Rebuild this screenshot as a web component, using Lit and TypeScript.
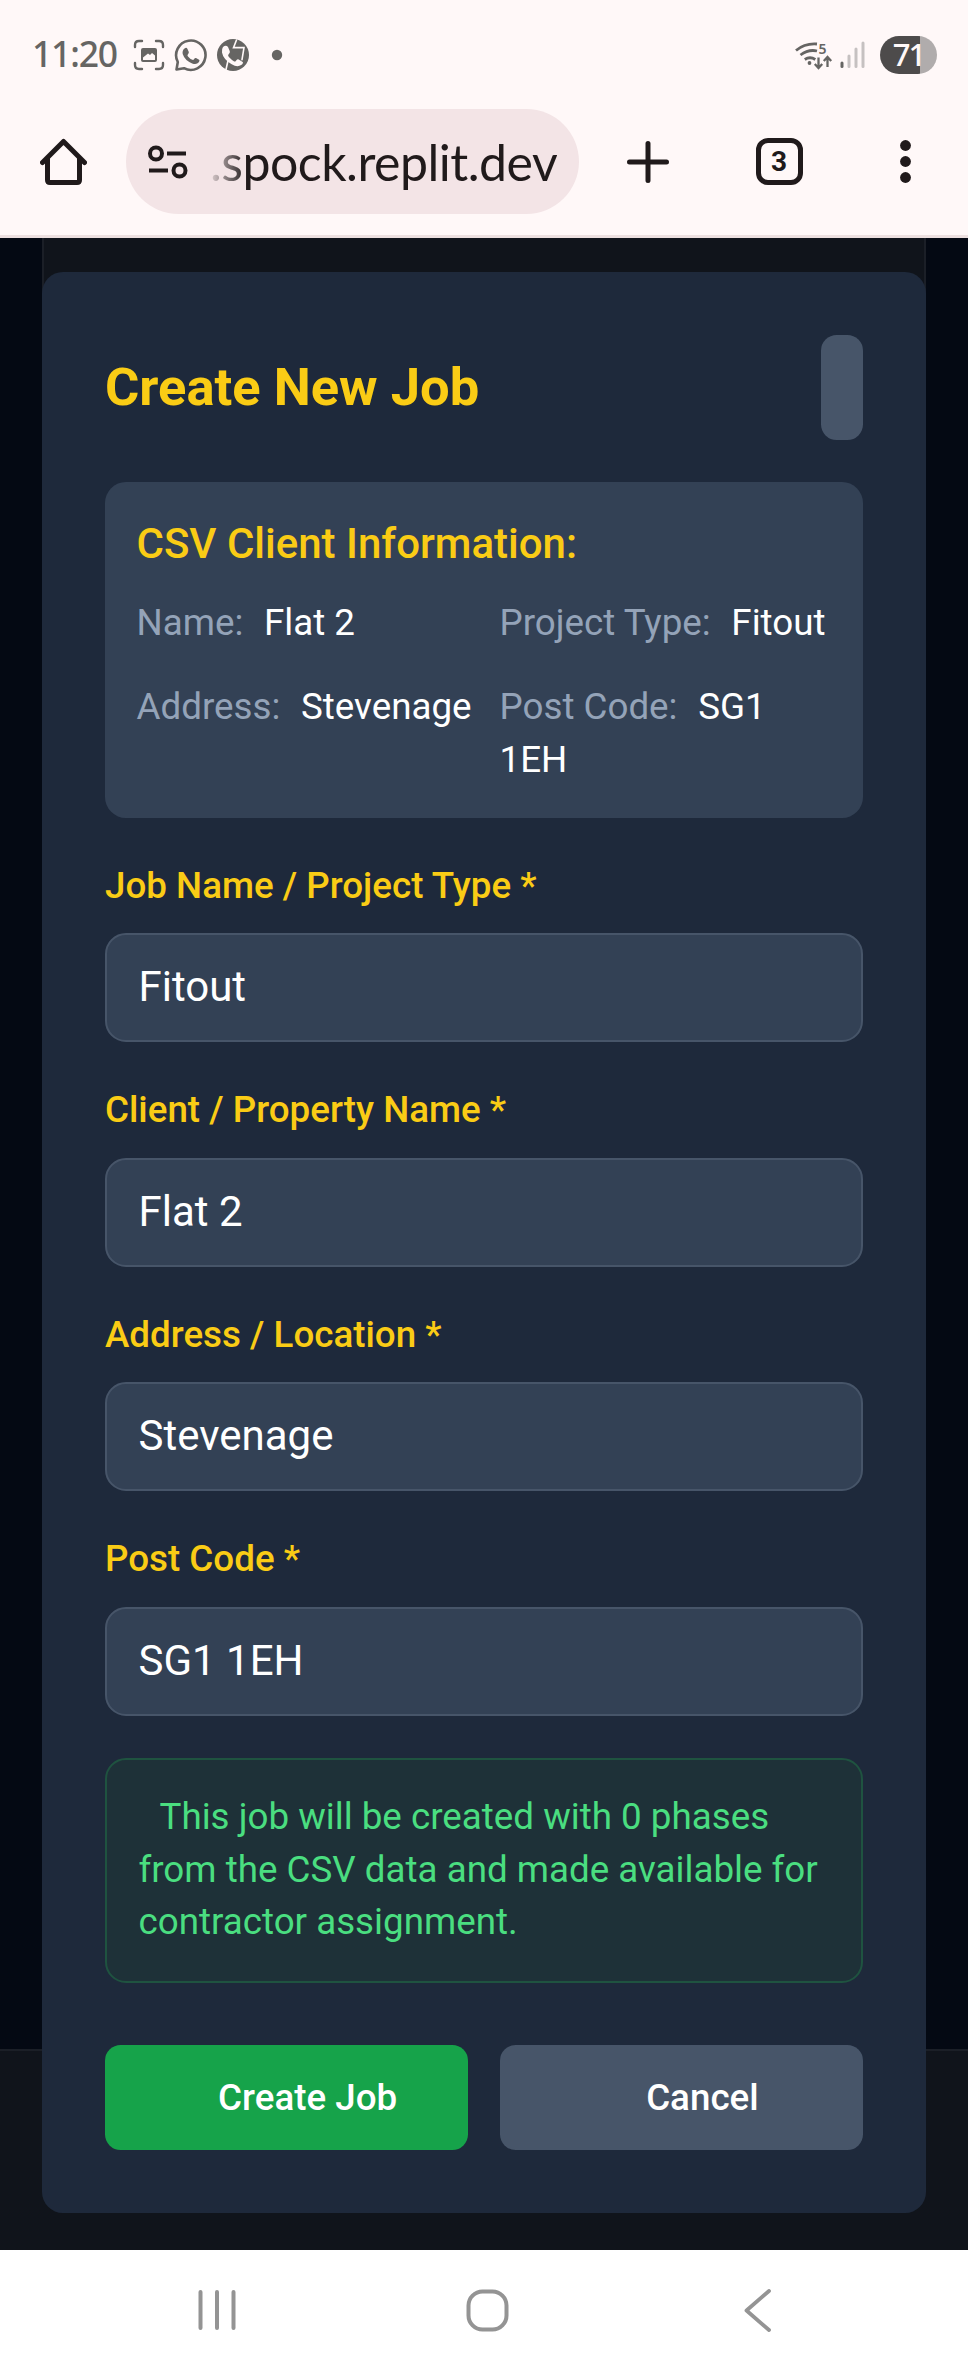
import { LitElement, html, css } from "lit";
import { customElement, property } from "lit/decorators.js";

@customElement("status-bar")
class StatusBar extends LitElement {
  static styles = css`
    :host { display: flex; align-items: center; height: 109px; box-sizing: border-box; padding: 0 31px 0 32px; color: #666563; }
    .clock { width: 101px; padding-bottom: 4px; font: 500 35.500px/48px "Noto Sans", sans-serif; letter-spacing: -1.200px; white-space: nowrap; }
    .left { flex: 1; display: flex; }
    svg { display: block; }
    .battery { display: grid; place-items: center; box-sizing: border-box; width: 57px; height: 38px; border-radius: 19px; margin-left: 14px; padding-bottom: 2px;
      background: linear-gradient(90deg, #4d4b4b 0 40px, #b0acac 40px); color: #fff8f8; font: 500 31px/36px "Noto Sans", sans-serif; letter-spacing: -2px; }
    .five { font: 600 14px "Noto Sans", sans-serif; fill: #666563; }
  `;
  render() {
    return html`
      <span class="clock">11:20</span>
      <span class="left">
        <svg width="155" height="34" viewBox="133 38 155 34" fill="none" stroke="#666563" stroke-width="2.4" stroke-linecap="round">
          <path d="M135 47v-2q0-4 4-4h3M156 41h3q4 0 4 4v2M163 63v2q0 4-4 4h-3M142 69h-3q-4 0-4-4v-2"/>
          <path fill="#666563" stroke="none" fill-rule="evenodd" d="M143 48h12q2 0 2 2v10q0 2-2 2h-12q-2 0-2-2V50q0-2 2-2zM143 60h12v-4.500l-3-2.500-2 2-2-1.500-5 4z"/>
          <path stroke-width="2.600" stroke-linejoin="round" d="M176.500 69.500l1.300-7.500A14.700 14.700 0 1 1 184 68.200z"/>
          <path fill="#666563" stroke="none" d="M184.500 48.500q2-1.500 3 .5l1.300 3q.4 1-1 2.400-.8.800.2 2 2 2.500 4.500 3.400.8.300 1.300-.4 1.300-1.800 2.200-1.300l3.100 1.600q1 .6-.3 2.600-2.300 2.700-6.600 1.100-7.500-3-9.500-9.400-.7-3.500 1.800-5.500z"/>
          <circle cx="233" cy="55" r="16" fill="#666563" stroke="none"/>
          <path fill="#fff8f8" stroke="none" d="M223 47q3-2.500 5 0l1.800 4.300q.6 1.500-1.500 3.400-.6 1 .6 2.400 2.700 3 5.300 4.400 1 .3 1.800-.8 1.600-2 2.700-1.200l4 2.400q1 1-1.500 3.200-4 2.500-9.500-.8-8.500-5-9.700-11.800-.5-3.500 1-5.500z"/>
          <path stroke="#fff8f8" stroke-width="1.600" d="M236.500 40l-3 7.600h10.500l-2 12M228 60.500l-2 9"/>
          <circle cx="277" cy="55" r="5.200" fill="#666563" stroke="none"/>
        </svg>
      </span>
      <svg width="72" height="38" viewBox="795 36 72 38" fill="none" stroke="#666563" stroke-width="2.800">
        <path d="M797 50.500q9-7.500 21-6.500M801.500 55q8-6 16.500-4M805.800 59.500q5.200-3.500 10.500 0"/>
        <circle cx="810.500" cy="63" r="1.900" fill="#666563" stroke="none"/>
        <path stroke-width="2.300" d="M819.500 57.500v9.500M815.800 64l3.700 4 3.700-4M828.500 67v-9.500M824.800 61l3.700-4 3.700 4"/>
        <text class="five" x="819.500" y="54" stroke="none">5</text>
        <g stroke-width="3" stroke-linecap="round"><path d="M843 63v3.500"/><path stroke="#c6c1c1" d="M850 56v10.500M857 49v17.500M864 43v23.500"/></g>
      </svg>
      <span class="battery">71</span>
    `;
  }
}

@customElement("browser-bar")
class BrowserBar extends LitElement {
  static styles = css`
    :host { display: flex; align-items: center; height: 129px; box-sizing: border-box; padding: 0 44px 21px 40px; border-bottom: 3px solid #ede0e0; color: #201a1b; }
    svg { display: block; flex: none; }
    .home { margin-right: 39px; }
    .omnibox { display: flex; align-items: center; box-sizing: border-box; width: 453px; height: 105px; border-radius: 52.500px; padding-left: 22px; background: #f3e4e6; margin-right: 47.500px; }
    .url { margin-left: 22px; font: 400 50px/60px Lato, sans-serif; letter-spacing: -0.500px; white-space: nowrap;
      color: transparent; background: linear-gradient(90deg, rgba(32,26,27,.1) 0, #201a1b 36px); background-clip: text; -webkit-background-clip: text; }
    .tabs { display: grid; place-items: center; box-sizing: border-box; width: 47px; height: 47px; border: 5px solid #201a1b; border-radius: 12px; margin: 0 97.500px 0 87px; font: 700 28px/30px Roboto, sans-serif; }
  `;
  render() {
    return html`
      <svg class="home" width="47" height="48" viewBox="0 0 47 48" fill="none" stroke="#201a1b" stroke-width="5" stroke-linecap="round" stroke-linejoin="round">
        <path d="M2.500 24.500L23.500 3.500l21 21M7.500 20v22q0 2.500 2.500 2.500h27q2.500 0 2.500-2.500V20"/>
      </svg>
      <div class="omnibox">
        <svg width="40" height="34" viewBox="0 0 40 34" fill="none" stroke="#201a1b" stroke-width="4">
          <circle cx="8" cy="8.500" r="6"/><circle cx="31.500" cy="25.500" r="6"/><path d="M19 8.500h19M1 25.500h19"/>
        </svg>
        <span class="url">.spock.replit.dev</span>
      </div>
      <svg width="42" height="42" viewBox="0 0 42 42" stroke="#201a1b" stroke-width="5" stroke-linecap="round"><path d="M21 2.500v37M2.500 21h37"/></svg>
      <span class="tabs">3</span>
      <svg width="11" height="43" viewBox="0 0 11 43" fill="#201a1b"><circle cx="5.500" cy="5.500" r="5.400"/><circle cx="5.500" cy="21.500" r="5.400"/><circle cx="5.500" cy="37.500" r="5.400"/></svg>
    `;
  }
}

@customElement("form-field")
class FormField extends LitElement {
  @property() label = "";
  @property() value = "";
  static styles = css`
    :host { display: flex; flex-direction: column; gap: 21px; }
    .label { color: #facc15; font-weight: 500; font-size: 36.750px; line-height: 52.500px; }
    .input { box-sizing: border-box; width: 100%; height: 109px; margin: 0; padding: 0 31.500px 2px; border: 2px solid #475569; border-radius: 21px; background: #334155; color: #fff; font: 400 42px/63px Roboto, sans-serif; outline: none; }
  `;
  render() {
    return html`<label class="label" for="f">${this.label}</label><input class="input" id="f" .value=${this.value} />`;
  }
}

@customElement("job-dialog")
class JobDialog extends LitElement {
  static styles = css`
    :host { display: block; box-sizing: border-box; height: 1941px; padding: 63px; border-radius: 21px; background: #1e293b; font: 400 36.750px/52.500px Roboto, sans-serif; color: #fff; }
    .head { display: flex; align-items: center; justify-content: space-between; height: 105px; margin-bottom: 42px; }
    .title { margin: 0; color: #facc15; font-size: 52.500px; line-height: 73.500px; font-weight: 700; }
    .close { width: 42px; height: 105px; padding: 0; border: 0; border-radius: 15.750px; background: #475569; }
    .info { padding: 31px 31.500px 32px; border-radius: 21px; background: #334155; margin-bottom: 41.500px; }
    .info-title { margin: 0 0 23px; color: #facc15; font-size: 42px; line-height: 61px; font-weight: 500; }
    .grid { display: grid; grid-template-columns: 342px minmax(0, 1fr); gap: 31.500px 21px; }
    .key { color: #94a3b8; }
    .val { margin-left: 11.500px; }
    .fields { display: flex; flex-direction: column; gap: 42px; margin-bottom: 42.500px; }
    .note { box-sizing: border-box; padding: 31px 31.500px 32px; border: 2px solid #1f5340; border-radius: 21px; background: #1e3138; color: #4ade80; text-indent: 21px; margin-bottom: 62.500px; }
    .actions { display: grid; grid-template-columns: 1fr 1fr; gap: 31.500px; }
    .btn { height: 105px; padding: 2px 0 0 42px; border: 0; border-radius: 15.750px; background: #475569; color: #fff; font: 500 36.750px/52.500px Roboto, sans-serif; }
    .primary { background: #16a34a; }
  `;
  info = [["Name:", "Flat 2"], ["Project Type:", "Fitout"], ["Address:", "Stevenage"], ["Post Code:", "SG1 1EH"]];
  fields = [["Job Name / Project Type *", "Fitout"], ["Client / Property Name *", "Flat 2"], ["Address / Location *", "Stevenage"], ["Post Code *", "SG1 1EH"]];
  render() {
    return html`
      <div class="head"><h2 class="title">Create New Job</h2><button class="close" aria-label="Close"></button></div>
      <section class="info">
        <h3 class="info-title">CSV Client Information:</h3>
        <div class="grid">${this.info.map(([k, v]) => html`<div><span class="key">${k}</span>&nbsp;<span class="val">${v}</span></div>`)}</div>
      </section>
      <div class="fields">${this.fields.map(([l, v]) => html`<form-field .label=${l} .value=${v}></form-field>`)}</div>
      <div class="note">This job will be created with 0 phases from the CSV data and made available for contractor assignment.</div>
      <div class="actions"><button class="btn primary">Create Job</button><button class="btn">Cancel</button></div>
    `;
  }
}

@customElement("nav-bar")
class NavBar extends LitElement {
  static styles = css`
    :host { display: flex; align-items: center; height: 126px; box-sizing: border-box; padding: 0 0 6px 198px; background: #fff; }
    .home { margin: 0 235.500px 0 229.500px; }
  `;
  render() {
    return html`
      <svg width="38" height="40" viewBox="0 0 38 40" stroke="#949494" stroke-width="4" stroke-linecap="round"><path d="M2.500 2v36M19 2v36M35.500 2v36"/></svg>
      <svg class="home" width="43" height="43" viewBox="0 0 43 43" fill="none" stroke="#949494" stroke-width="4"><rect x="2.500" y="2.500" width="38" height="38" rx="14"/></svg>
      <svg width="27" height="43" viewBox="0 0 27 43" fill="none" stroke="#949494" stroke-width="3.800" stroke-linecap="round" stroke-linejoin="round"><path d="M25 2L2.500 21.500 25 41"/></svg>
    `;
  }
}

@customElement("app-root")
class AppRoot extends LitElement {
  static styles = css`
    :host { display: block; width: 968px; height: 2376px; overflow: hidden; background: #fff8f8; }
    .page { display: grid; grid-template: 1811px 201px / 1fr; background: #040913; }
    .panel { grid-area: 1 / 1; margin: 0 42px; border: solid #1b1f27; border-width: 0 2px; background: #10141b; }
    .footer { grid-area: 2 / 1; border-top: 2px solid #1b1f27; background: #10141b; }
    .dialog { grid-area: 1 / 1 / 3 / 2; margin: 34px 42px 37px; }
  `;
  render() {
    return html`
      <status-bar></status-bar>
      <browser-bar></browser-bar>
      <main class="page"><div class="panel"></div><div class="footer"></div><job-dialog class="dialog"></job-dialog></main>
      <nav-bar></nav-bar>
    `;
  }
}
